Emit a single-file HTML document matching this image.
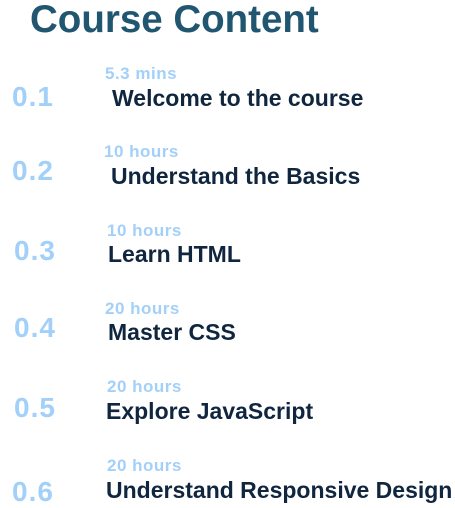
<!DOCTYPE html>
<html><head><meta charset="utf-8"><style>
body{margin:0;width:455px;height:508px;background:#fff;position:relative;overflow:hidden;font-family:"Liberation Sans",sans-serif;font-weight:bold}
div{position:absolute;line-height:1;white-space:nowrap}
.h{left:30px;top:1px;font-size:38.5px;color:#215670}
.n{font-size:28px;color:#a3d0f8;letter-spacing:1px}
.s{font-size:17px;color:#a3d0f8;letter-spacing:0.5px}
.t{font-size:23px;color:#10263f}
</style></head><body>
<div class="h">Course Content</div>
<div class="n" style="left:12px;top:83px">0.1</div>
<div class="s" style="left:105px;top:65px">5.3 mins</div>
<div class="t" style="left:112px;top:87px">Welcome to the course</div>
<div class="n" style="left:12px;top:157px">0.2</div>
<div class="s" style="left:104px;top:143px">10 hours</div>
<div class="t" style="left:111px;top:165px">Understand the Basics</div>
<div class="n" style="left:14px;top:237px">0.3</div>
<div class="s" style="left:107px;top:222px">10 hours</div>
<div class="t" style="left:108px;top:243px">Learn HTML</div>
<div class="n" style="left:14px;top:314px">0.4</div>
<div class="s" style="left:105px;top:300px">20 hours</div>
<div class="t" style="left:108px;top:321px">Master CSS</div>
<div class="n" style="left:14px;top:394px">0.5</div>
<div class="s" style="left:107px;top:378px">20 hours</div>
<div class="t" style="left:106px;top:400px">Explore JavaScript</div>
<div class="n" style="left:12px;top:478px">0.6</div>
<div class="s" style="left:107px;top:457px">20 hours</div>
<div class="t" style="left:106px;top:479px">Understand Responsive Design</div>
</body></html>
